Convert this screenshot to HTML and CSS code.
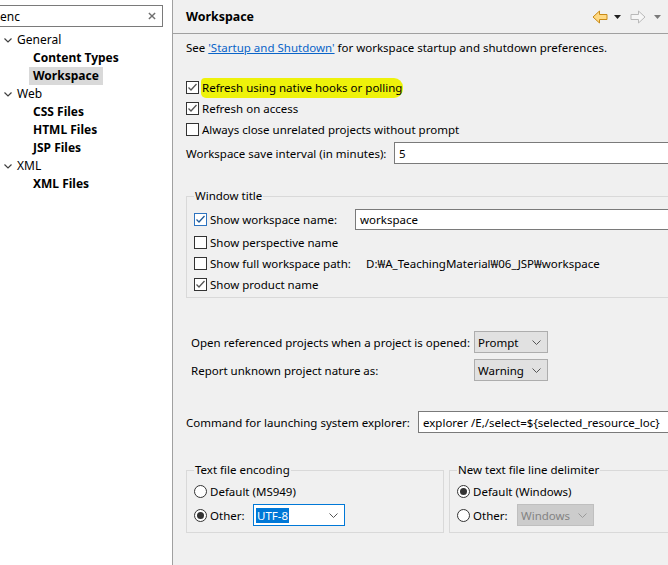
FILE: index.html
```html
<!DOCTYPE html>
<html>
<head>
<meta charset="utf-8">
<link rel="stylesheet" href="styles.css">
</head>
<body>
<div class="app">
  <aside class="side">
    <div class="search">
      <span class="search-text">enc</span>
      <svg class="clear" viewBox="0 0 9 9"><path d="M1 1L8 8M8 1L1 8"/></svg>
    </div>
    <ul class="tree">
      <li class="node"><svg class="chev" viewBox="0 0 8 5"><path d="M0.5 0.5L4 4L7.5 0.5"/></svg>General</li>
      <li class="leaf"><span class="leaf-label">Content Types</span></li>
      <li class="leaf"><span class="leaf-label sel">Workspace</span></li>
      <li class="node"><svg class="chev" viewBox="0 0 8 5"><path d="M0.5 0.5L4 4L7.5 0.5"/></svg>Web</li>
      <li class="leaf"><span class="leaf-label">CSS Files</span></li>
      <li class="leaf"><span class="leaf-label">HTML Files</span></li>
      <li class="leaf"><span class="leaf-label">JSP Files</span></li>
      <li class="node"><svg class="chev" viewBox="0 0 8 5"><path d="M0.5 0.5L4 4L7.5 0.5"/></svg>XML</li>
      <li class="leaf"><span class="leaf-label">XML Files</span></li>
    </ul>
  </aside>

  <main class="main">
    <header class="head">
      <h1 class="title">Workspace</h1>
      <div class="nav">
        <svg class="arrow" viewBox="0 0 16 14"><path class="back" d="M1 7L7.5 1V4.5H15V9.5H7.5V13Z"/></svg>
        <svg class="drop drop-first" viewBox="0 0 7 4"><path class="drop-dark" d="M0 0H7L3.5 4Z"/></svg>
        <svg class="arrow" viewBox="0 0 16 14"><path class="fwd" d="M15 7L8.5 1V4.5H1V9.5H8.5V13Z"/></svg>
        <svg class="drop drop-last" viewBox="0 0 7 4"><path class="drop-light" d="M0 0H7L3.5 4Z"/></svg>
      </div>
    </header>

    <div class="content">
      <p class="see">See <span class="link">'Startup and Shutdown'</span> for workspace startup and shutdown preferences.</p>

      <div class="checks">
        <div class="row">
          <svg class="cb" viewBox="0 0 13 13"><rect x="0.5" y="0.5" width="12" height="12"/><path d="M2.5 6.5L5 9L10.5 3"/></svg>
          <span class="hl">Refresh using native hooks or polling</span>
        </div>
        <div class="row">
          <svg class="cb" viewBox="0 0 13 13"><rect x="0.5" y="0.5" width="12" height="12"/><path d="M2.5 6.5L5 9L10.5 3"/></svg>
          <span>Refresh on access</span>
        </div>
        <div class="row">
          <svg class="cb" viewBox="0 0 13 13"><rect x="0.5" y="0.5" width="12" height="12"/></svg>
          <span>Always close unrelated projects without prompt</span>
        </div>
      </div>

      <div class="interval">
        <span class="interval-label">Workspace save interval (in minutes):</span>
        <div class="textbox">5</div>
      </div>

      <fieldset class="group window-group">
        <legend class="legend">Window title</legend>
        <div class="row row-first">
          <span class="check-label name-label">
            <svg class="cb cb-hover" viewBox="0 0 13 13"><rect x="0.5" y="0.5" width="12" height="12"/><path d="M2.5 6.5L5 9L10.5 3"/></svg>
            <span>Show workspace name:</span>
          </span>
          <div class="textbox textbox-name">workspace</div>
        </div>
        <div class="row">
          <svg class="cb" viewBox="0 0 13 13"><rect x="0.5" y="0.5" width="12" height="12"/></svg>
          <span>Show perspective name</span>
        </div>
        <div class="row">
          <span class="check-label path-label">
            <svg class="cb" viewBox="0 0 13 13"><rect x="0.5" y="0.5" width="12" height="12"/></svg>
            <span>Show full workspace path:</span>
          </span>
          <span>D:&#8361;A_TeachingMaterial&#8361;06_JSP&#8361;workspace</span>
        </div>
        <div class="row">
          <svg class="cb" viewBox="0 0 13 13"><rect x="0.5" y="0.5" width="12" height="12"/><path d="M2.5 6.5L5 9L10.5 3"/></svg>
          <span>Show product name</span>
        </div>
      </fieldset>

      <div class="opts">
        <span class="opt-label">Open referenced projects when a project is opened:</span>
        <div class="combo"><span>Prompt</span><svg class="combo-chev" viewBox="0 0 9 5"><path d="M0.5 0.5L4.5 4.5L8.5 0.5"/></svg></div>
        <span class="opt-label">Report unknown project nature as:</span>
        <div class="combo"><span>Warning</span><svg class="combo-chev" viewBox="0 0 9 5"><path d="M0.5 0.5L4.5 4.5L8.5 0.5"/></svg></div>
      </div>

      <div class="cmd">
        <span class="cmd-label">Command for launching system explorer:</span>
        <div class="textbox textbox-cmd">explorer /E,/select=${selected_resource_loc}</div>
      </div>

      <div class="groups">
        <fieldset class="group enc-group">
          <legend class="legend">Text file encoding</legend>
          <div class="radio-row">
            <svg class="rb" viewBox="0 0 13 13"><circle cx="6.5" cy="6.5" r="6"/></svg>
            <span>Default (MS949)</span>
          </div>
          <div class="radio-row row-combo">
            <span class="radio-label">
              <svg class="rb" viewBox="0 0 13 13"><circle cx="6.5" cy="6.5" r="6"/><circle class="dot" cx="6.5" cy="6.5" r="3.5"/></svg>
              <span>Other:</span>
            </span>
            <div class="combo combo-focus"><span class="selected-text">UTF-8</span><svg class="combo-chev" viewBox="0 0 9 5"><path d="M0.5 0.5L4.5 4.5L8.5 0.5"/></svg></div>
          </div>
        </fieldset>
        <fieldset class="group delim-group">
          <legend class="legend">New text file line delimiter</legend>
          <div class="radio-row">
            <svg class="rb" viewBox="0 0 13 13"><circle cx="6.5" cy="6.5" r="6"/><circle class="dot" cx="6.5" cy="6.5" r="3.5"/></svg>
            <span>Default (Windows)</span>
          </div>
          <div class="radio-row row-combo">
            <span class="radio-label radio-label-wide">
              <svg class="rb" viewBox="0 0 13 13"><circle cx="6.5" cy="6.5" r="6"/></svg>
              <span>Other:</span>
            </span>
            <div class="combo combo-disabled"><span>Windows</span><svg class="combo-chev" viewBox="0 0 9 5"><path d="M0.5 0.5L4.5 4.5L8.5 0.5"/></svg></div>
          </div>
        </fieldset>
      </div>
    </div>
  </main>
</div>
</body>
</html>
```

FILE: styles.css
```css
html, body {
  margin: 0;
  padding: 0;
}
body {
  background: #f0f0f0;
  font-family: "Noto Sans", "Liberation Sans", sans-serif;
  font-size: 11.5px;
  line-height: 17px;
  color: #000;
}
.app {
  display: flex;
  width: 668px;
  height: 565px;
  overflow: hidden;
}

/* sidebar */
.side {
  flex: none;
  width: 172px;
  background: #fff;
  border-right: 1px solid #a0a0a0;
  overflow: hidden;
}
.search {
  box-sizing: border-box;
  margin: 5px 0 0 -5px;
  width: 168px;
  height: 22px;
  border: 1px solid #7a7a7a;
  display: flex;
  align-items: center;
  justify-content: space-between;
  padding: 0 6px 0 4px;
  font-size: 12px;
}
.clear {
  width: 8px;
  height: 8px;
}
.clear path {
  stroke: #707070;
  stroke-width: 1.6;
  fill: none;
}
.tree {
  list-style: none;
  margin: 4px 0 0;
  padding: 0;
  font-size: 12px;
}
.tree li {
  height: 18px;
  line-height: 18px;
  white-space: nowrap;
}
.node {
  display: flex;
  align-items: center;
}
.chev {
  width: 8px;
  height: 5px;
  margin: 0 5px 0 4px;
}
.chev path {
  fill: none;
  stroke: #404040;
  stroke-width: 1.2;
}
.leaf {
  padding-left: 29px;
  font-weight: bold;
}
.leaf-label {
  display: inline-block;
  padding: 0 4px;
  height: 18px;
}
.sel {
  background: #d9d9d9;
}

/* main */
.main {
  flex: 1;
  min-width: 0;
  overflow: hidden;
}
.head {
  height: 33px;
  border-bottom: 1px solid #a0a0a0;
  display: flex;
  align-items: center;
  justify-content: space-between;
  padding: 0 7px 0 13px;
}
.title {
  margin: 0;
  font-size: 12.4px;
  font-weight: bold;
}
.nav {
  display: flex;
  align-items: center;
}
.arrow {
  width: 16px;
  height: 14px;
}
.back {
  fill: #ffd983;
  stroke: #c98a16;
  stroke-width: 1;
  stroke-linejoin: round;
}
.fwd {
  fill: #f6f6f6;
  stroke: #b9b9b9;
  stroke-width: 1;
  stroke-linejoin: round;
}
.drop {
  width: 7px;
  height: 4px;
}
.drop-first {
  margin: 0 9px 0 6px;
}
.drop-last {
  margin-left: 8px;
}
.drop-dark { fill: #1e1e1e; }
.drop-light { fill: #7a7a7a; }

.content {
  width: 560px;
  padding-left: 13px;
}
.see {
  margin: 5px 0 0;
  height: 17px;
  white-space: nowrap;
}
.link {
  color: #0a64c8;
  text-decoration: underline;
}

.checks {
  margin-top: 21px;
}
.row {
  display: flex;
  align-items: center;
  height: 21px;
  white-space: nowrap;
}
.cb {
  flex: none;
  width: 13px;
  height: 13px;
  margin-right: 3px;
}
.cb rect {
  fill: #fff;
  stroke: #333;
  stroke-width: 1;
}
.cb path {
  fill: none;
  stroke: #555;
  stroke-width: 1.3;
}
.cb-hover rect {
  stroke: #2d73c0;
}
.cb-hover path {
  stroke: #1f5a99;
}
.hl {
  background: #eef20a;
  border-radius: 4px 9px 9px 5px;
  padding: 1px 1px 2px;
  margin-left: -1px;
}

.interval {
  margin-top: 2px;
  display: flex;
  align-items: center;
  height: 22px;
  white-space: nowrap;
}
.interval-label {
  width: 208px;
  flex: none;
}
.textbox {
  box-sizing: border-box;
  height: 22px;
  background: #fff;
  border: 1px solid #7a7a7a;
  padding: 0 4px;
  display: flex;
  align-items: center;
  flex: 1;
  white-space: nowrap;
}

.group {
  margin: 0;
  border: 1px solid #d9d9d9;
  padding: 0 0 2px 7px;
  min-width: 0;
}
.legend {
  padding: 0 1px;
  line-height: 16px;
}
.window-group {
  margin-top: 24px;
}
.row-first {
  margin-top: 4px;
  height: 22px;
  margin-bottom: 2px;
}
.check-label {
  display: flex;
  align-items: center;
  flex: none;
}
.name-label {
  width: 161px;
}
.path-label {
  width: 172px;
}
.textbox-name {
  height: 21px;
}

.opts {
  margin: 33px 0 0 5px;
  display: grid;
  grid-template-columns: 283px auto;
  row-gap: 6px;
  justify-content: start;
  align-items: center;
}
.opt-label {
  white-space: nowrap;
}
.combo {
  box-sizing: border-box;
  height: 22px;
  width: 74px;
  background: #e1e1e1;
  border: 1px solid #adadad;
  display: flex;
  align-items: center;
  justify-content: space-between;
  padding: 0 6px 0 3px;
  white-space: nowrap;
}
.combo-chev {
  width: 9px;
  height: 5px;
}
.combo-chev path {
  fill: none;
  stroke: #555;
  stroke-width: 1;
}

.cmd {
  margin-top: 30px;
  display: flex;
  align-items: center;
  height: 22px;
  white-space: nowrap;
}
.cmd-label {
  width: 232px;
  flex: none;
}
.textbox-cmd {
  padding-left: 4px;
}

.groups {
  margin-top: 29px;
  display: flex;
  gap: 5px;
}
.enc-group {
  box-sizing: border-box;
  width: 258px;
  flex: none;
  padding-bottom: 6px;
}
.delim-group {
  flex: 1;
  padding-bottom: 6px;
}
.radio-row {
  display: flex;
  align-items: center;
  height: 18px;
  margin-top: 4px;
  white-space: nowrap;
}
.row-combo {
  height: 22px;
}
.radio-label {
  display: flex;
  align-items: center;
  width: 59px;
  flex: none;
}
.radio-label-wide {
  width: 60px;
}
.rb {
  flex: none;
  width: 13px;
  height: 13px;
  margin-right: 3px;
}
.rb circle {
  fill: #fff;
  stroke: #333;
  stroke-width: 1;
}
.rb .dot {
  fill: #333;
  stroke: none;
}
.combo-focus {
  width: 92px;
  background: #fff;
  border-color: #0078d7;
  padding-left: 2px;
  padding-right: 6px;
}
.selected-text {
  background: #0078d7;
  color: #fff;
  padding: 0 1px;
  line-height: 15px;
}
.combo-disabled {
  width: 77px;
  background: #cccccc;
  border-color: #bfbfbf;
  color: #838383;
}
.combo-disabled .combo-chev path {
  stroke: #9a9a9a;
}
```
